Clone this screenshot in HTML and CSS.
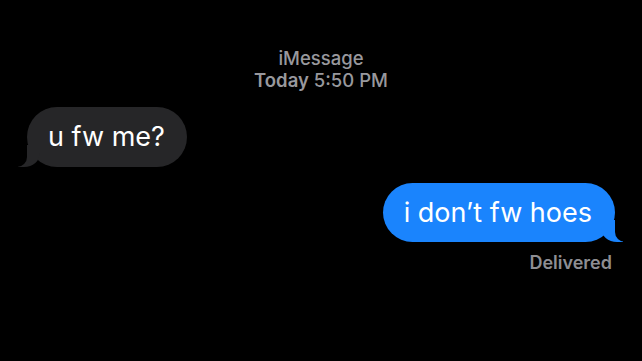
FILE: index.html
```html
<!DOCTYPE html>
<html>
<head>
    <title>iMessage</title>
    <link rel="stylesheet" href="styles.css">
</head>
<body>
    <div class="thread">
        <div class="thread-head">
            <div class="service">iMessage</div>
            <div class="stamp"><b>Today</b> 5:50 PM</div>
        </div>
        <div class="row row-in">
            <div class="bubble bubble-in">u fw me?</div>
        </div>
        <div class="row row-out">
            <div class="bubble bubble-out">i don’t fw hoes</div>
        </div>
        <div class="status">Delivered</div>
    </div>
</body>
</html>
```
FILE: styles.css
```css
body {
    margin: 0;
    padding: 0;
    background-color: #000;
    font-family: Inter, "Noto Sans", sans-serif;
    width: 642px;
    height: 361px;
    overflow: hidden;
}

.thread {
    display: flex;
    flex-direction: column;
    padding: 47px 27px 0 27px;
}

.thread-head {
    text-align: center;
    color: #98989d;
    font-size: 18.5px;
    font-weight: 500;
    line-height: 22px;
    margin-bottom: 16px;
}

.stamp b {
    font-weight: 600;
}

.row {
    display: flex;
    margin-bottom: 16px;
}

.row-out {
    justify-content: flex-end;
    margin-bottom: 10px;
}

.bubble {
    position: relative;
    height: 60px;
    line-height: 60px;
    font-size: 27px;
    color: #fff;
    border-radius: 30px;
    padding: 0 22px 0 21px;
}

.bubble-in {
    background-color: #262628;
}

.bubble-out {
    background-color: #1a84fd;
    padding: 0 23px 0 21px;
    height: 59px;
    line-height: 59px;
}

/* tails */
.bubble::before,
.bubble::after {
    content: "";
    position: absolute;
    bottom: 0;
    height: 22px;
}

.bubble-in::before {
    left: -9px;
    width: 22px;
    background-color: #262628;
    border-bottom-right-radius: 16px 14px;
}

.bubble-in::after {
    left: -12px;
    width: 12px;
    background-color: #000;
    border-bottom-right-radius: 10px;
}

.bubble-out::before {
    right: -8px;
    width: 22px;
    background-color: #1a84fd;
    border-bottom-left-radius: 16px 14px;
}

.bubble-out::after {
    right: -11px;
    width: 11px;
    background-color: #000;
    border-bottom-left-radius: 10px;
}

.status {
    text-align: right;
    color: #8e8e93;
    font-size: 18px;
    font-weight: 600;
    line-height: 22px;
    margin-right: 3px;
}
```
